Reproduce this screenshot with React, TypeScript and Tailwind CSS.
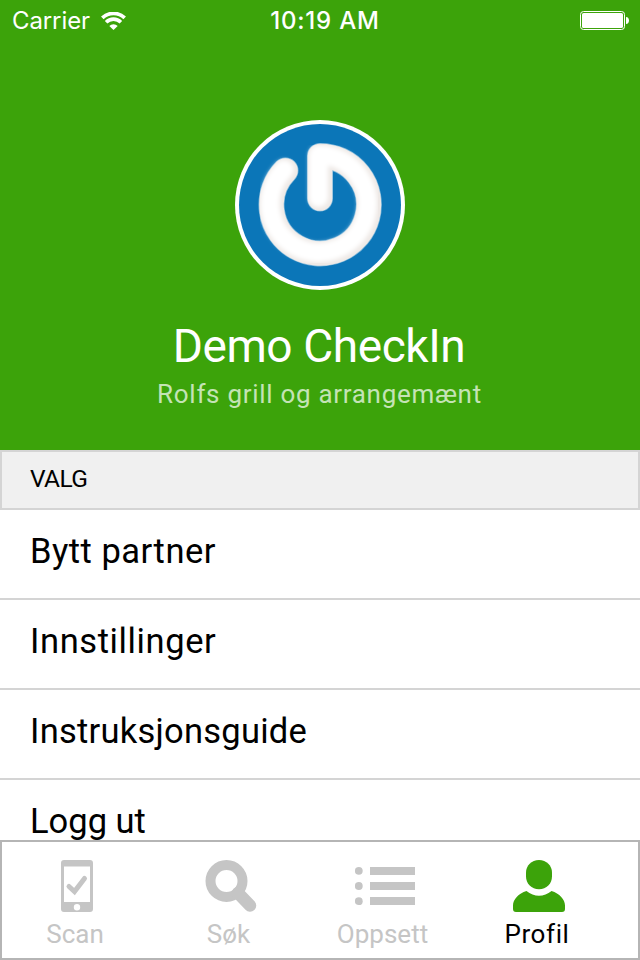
import type { ReactNode } from "react";
import clsx from "clsx";

interface TabProps {
  label: string;
  active?: boolean;
  labelClass: string;
  children: ReactNode;
}

const options = [
  { label: "Bytt partner", tracking: "tracking-[0.5px]" },
  { label: "Innstillinger", tracking: "tracking-[0.6px]" },
  { label: "Instruksjonsguide", tracking: "tracking-[0.25px]" },
  { label: "Logg ut", tracking: "tracking-normal" },
];

function StatusBar() {
  return (
    <div className="grid h-10 grid-cols-3 items-center pr-[11px] pl-3 font-['Inter',sans-serif] text-2xl leading-10">
      <div className="flex items-center gap-[11px] pt-px">
        <span className="tracking-[-0.1px]">Carrier</span>
        <svg width="25" height="18" viewBox="0 0 25 18" fill="none" stroke="currentColor" strokeWidth="3.6">
          <path d="M1.3 5.9a16 16 0 0 1 22.4 0" />
          <path d="M5.1 10.2a10.5 10.5 0 0 1 14.8 0" />
          <path d="M12.5 18 8.3 13.900a5.900 5.900 0 0 1 8.400 0z" fill="currentColor" stroke="none" />
        </svg>
      </div>
      <span className="pt-px pl-[9px] text-center font-medium tracking-[0.8px] whitespace-nowrap">10:19 AM</span>
      <svg className="justify-self-end" width="49" height="19" viewBox="0 0 49 19" fill="currentColor">
        <rect x="0.5" y="0.5" width="44" height="18" rx="3" fill="none" stroke="currentColor" />
        <rect x="2" y="2" width="41" height="15" rx="1.6" />
        <path d="M46 6c2 0 3 1.6 3 3.5S48 13 46 13z" />
      </svg>
    </div>
  );
}

function Avatar() {
  return (
    <svg className="mt-20" width="170" height="170" viewBox="0 0 170 170" fill="none">
      <defs>
        <filter id="soft" x="-10%" y="-10%" width="120%" height="120%">
          <feGaussianBlur stdDeviation="2" />
        </filter>
      </defs>
      <circle cx="85" cy="85" r="85" fill="white" />
      <circle cx="85" cy="85" r="81" fill="#0b76b8" />
      <g strokeLinecap="round" strokeLinejoin="round">
        <path d="M50.5 50.5A48.7 48.7 0 1 0 85 36V78.5" stroke="#7fb7da" strokeWidth="26" />
        <path d="M50.5 50.5A48.7 48.7 0 1 0 85 36V78.5" stroke="#eee9e6" strokeWidth="24.6" />
        <path
          d="M49 49.5A48.7 48.7 0 1 0 83.5 35V77.5"
          stroke="white"
          strokeWidth="19"
          filter="url(#soft)"
        />
      </g>
    </svg>
  );
}

function Tab({ label, active, labelClass, children }: TabProps) {
  return (
    <button
      className={clsx(
        "flex w-[150px] flex-col items-center pt-[18px]",
        active ? "text-[#3ca30a]" : "text-[#c5c5c5]"
      )}
    >
      <span className="flex h-[52px] items-center">{children}</span>
      <span className={clsx("mt-1.5 text-[26px] leading-8", active && "text-black", labelClass)}>{label}</span>
    </button>
  );
}

export default function App() {
  return (
    <div className="flex h-[960px] w-[640px] flex-col overflow-hidden bg-white font-['Roboto',sans-serif] text-black">
      {/* Profile header */}
      <header className="h-[450px] shrink-0 bg-[#3ca30a] text-white">
        <StatusBar />
        <div className="flex flex-col items-center">
          <Avatar />
          <h1 className="mt-[30px] -ml-0.5 text-[46px] leading-[52px] tracking-[-0.4px]">Demo CheckIn</h1>
          <p className="mt-1.5 -ml-px text-[26px] leading-8 tracking-[0.7px] text-[#c4e3b5]">Rolfs grill og arrangemænt</p>
        </div>
      </header>

      {/* Options */}
      <main className="min-h-0 flex-1">
        <h2 className="flex h-[60px] items-center border-2 border-[#d4d4d4] bg-[#f0f0f0] pb-px pl-7 text-[24.5px] tracking-[-0.6px]">
          VALG
        </h2>
        <ul>
          {options.map((o) => (
            <li
              key={o.label}
              className={clsx(
                "flex h-[90px] items-center border-b-2 border-[#d4d4d4] pb-1.5 pl-[30px] text-[34.5px] leading-none",
                o.tracking
              )}
            >
              {o.label}
            </li>
          ))}
        </ul>
      </main>

      {/* Tab bar */}
      <nav className="relative flex h-[120px] shrink-0 gap-1 border-2 border-[#b5b5b5] bg-white">
        <Tab label="Scan" labelClass="-ml-1">
          <svg width="32" height="52" viewBox="0 0 32 52" fill="currentColor">
            <path
              fillRule="evenodd"
              d="M3 0h26a3 3 0 0 1 3 3v46a3 3 0 0 1-3 3H3a3 3 0 0 1-3-3V3a3 3 0 0 1 3-3zM3 6.5V42h26V6.5zM16 44a3.2 3.2 0 1 0 0 6.4 3.2 3.2 0 0 0 0-6.4z"
            />
            <path d="M8 26.5l5.5 5L23.5 18.5" fill="none" stroke="currentColor" strokeWidth="5" strokeLinecap="round" />
          </svg>
        </Tab>
        <Tab label="Søk" labelClass="-ml-[5px]">
          <svg width="52" height="52" viewBox="0 0 52 52" fill="none" stroke="currentColor">
            <circle cx="21.5" cy="21" r="16" strokeWidth="10" />
            <path d="M33 33l12 12.5" strokeWidth="12.5" strokeLinecap="round" />
          </svg>
        </Tab>
        <Tab label="Oppsett" labelClass="-ml-[5px]">
          <svg width="60" height="52" viewBox="0 0 60 52" fill="currentColor">
            <circle cx="3.8" cy="10.8" r="3.9" />
            <circle cx="3.8" cy="26" r="3.9" />
            <circle cx="3.8" cy="41.2" r="3.9" />
            <path d="M15 7h45v8H15zM15 22h45v8H15zM15 37h45v8H15z" />
          </svg>
        </Tab>
        <Tab label="Profil" labelClass="-ml-1 tracking-[0.6px]" active>
          <svg width="52" height="52" viewBox="0 0 52 52" fill="currentColor">
            <path d="M26 0c7.5 0 13 5.8 13 12.5v4C39 23.5 33.5 29.3 26 29.3S13 23.5 13 16.5v-4C13 5.8 18.5 0 26 0z" />
            <path d="M13.5 31c7.5 6.3 17.5 6.3 25 0C46.5 33.5 52 39.5 52 45.5V49c0 2-1 3-3 3H3c-2 0-3-1-3-3v-3.5C0 39.5 5.5 33.5 13.5 31z" />
          </svg>
        </Tab>
      </nav>
    </div>
  );
}
